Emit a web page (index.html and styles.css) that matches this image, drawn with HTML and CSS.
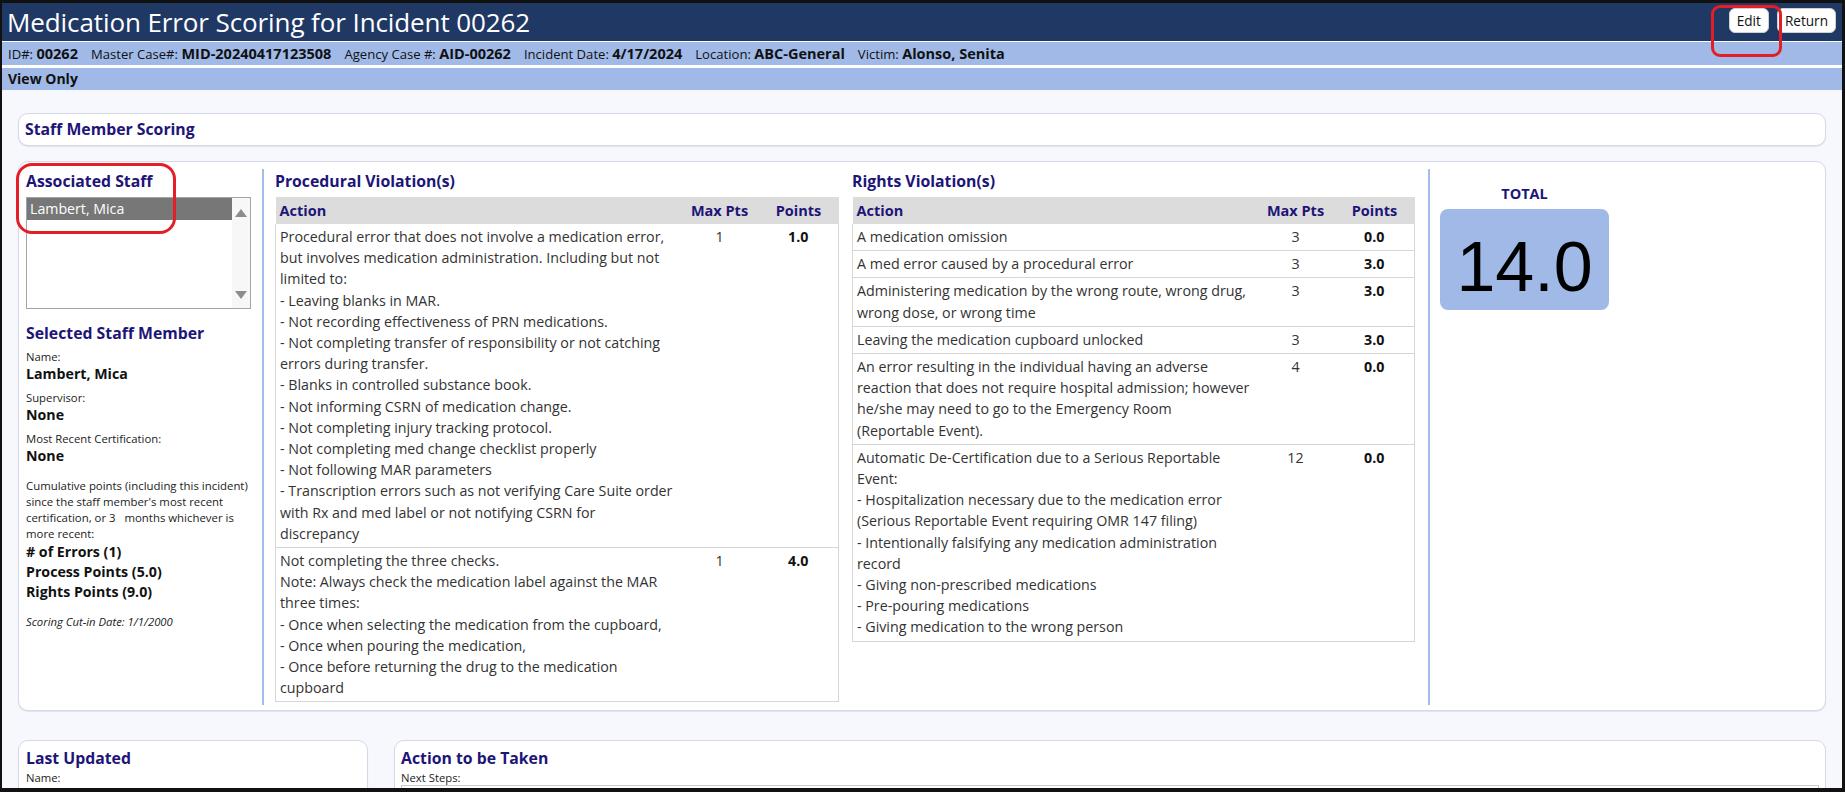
FILE: index.html
```html
<!DOCTYPE html>
<html lang="en">
<head>
<meta charset="utf-8">
<title>Medication Error Scoring for Incident 00262</title>
<link rel="stylesheet" href="styles.css">
</head>
<body>
<div class="screen">
  <header class="titlebar">
    <h1>Medication Error Scoring for Incident 00262</h1>
    <div class="actions">
      <button class="btn">Edit</button>
      <button class="btn">Return</button>
    </div>
  </header>
  <div class="infobar">
    <span class="item"><span class="lbl">ID#:</span> <b>00262</b></span>
    <span class="item"><span class="lbl">Master Case#:</span> <b>MID-20240417123508</b></span>
    <span class="item"><span class="lbl">Agency Case #:</span> <b>AID-00262</b></span>
    <span class="item"><span class="lbl">Incident Date:</span> <b>4/17/2024</b></span>
    <span class="item"><span class="lbl">Location:</span> <b>ABC-General</b></span>
    <span class="item"><span class="lbl">Victim:</span> <b>Alonso, Senita</b></span>
  </div>
  <div class="modebar">View Only</div>

  <main class="content">
    <section class="card card-head">
      <h2 class="card-title">Staff Member Scoring</h2>
    </section>

    <section class="card scoring">
      <div class="col staff">
        <h3 class="sec-title">Associated Staff</h3>
        <div class="listbox">
          <div class="list-items">
            <div class="list-item selected">Lambert, Mica</div>
          </div>
          <div class="list-scroll">
            <span class="arrow up"></span>
            <span class="arrow down"></span>
          </div>
        </div>

        <h3 class="sec-title sel-title">Selected Staff Member</h3>
        <div class="field">
          <div class="flabel">Name:</div>
          <div class="fvalue">Lambert, Mica</div>
        </div>
        <div class="field">
          <div class="flabel">Supervisor:</div>
          <div class="fvalue">None</div>
        </div>
        <div class="field">
          <div class="flabel">Most Recent Certification:</div>
          <div class="fvalue">None</div>
        </div>
        <p class="cumulative">Cumulative points (including this incident) since the staff member's most recent certification, or 3&nbsp;&nbsp; months whichever is<br>more recent:</p>
        <div class="totals">
          <div># of Errors (1)</div>
          <div>Process Points (5.0)</div>
          <div>Rights Points (9.0)</div>
        </div>
        <p class="cutin">Scoring Cut-in Date: 1/1/2000</p>
      </div>

      <div class="col proc">
        <h3 class="sec-title">Procedural Violation(s)</h3>
        <table class="vtable">
          <colgroup><col class="c-action"><col class="c-max"><col class="c-pts"></colgroup>
          <thead>
            <tr><th class="th-action">Action</th><th>Max Pts</th><th>Points</th></tr>
          </thead>
          <tbody>
            <tr>
              <td class="td-action">Procedural error that does not involve a medication error, but involves medication administration. Including but not limited to:<br>- Leaving blanks in MAR.<br>- Not recording effectiveness of PRN medications.<br>- Not completing transfer of responsibility or not catching errors during transfer.<br>- Blanks in controlled substance book.<br>- Not informing CSRN of medication change.<br>- Not completing injury tracking protocol.<br>- Not completing med change checklist properly<br>- Not following MAR parameters<br>- Transcription errors such as not verifying Care Suite order with Rx and med label or not notifying CSRN for<br>discrepancy</td>
              <td class="td-max">1</td>
              <td class="td-pts">1.0</td>
            </tr>
            <tr>
              <td class="td-action">Not completing the three checks.<br>Note: Always check the medication label against the MAR three times:<br>- Once when selecting the medication from the cupboard,<br>- Once when pouring the medication,<br>- Once before returning the drug to the medication cupboard</td>
              <td class="td-max">1</td>
              <td class="td-pts">4.0</td>
            </tr>
          </tbody>
        </table>
      </div>

      <div class="col rights">
        <h3 class="sec-title">Rights Violation(s)</h3>
        <table class="vtable">
          <colgroup><col class="c-action"><col class="c-max"><col class="c-pts"></colgroup>
          <thead>
            <tr><th class="th-action">Action</th><th>Max Pts</th><th>Points</th></tr>
          </thead>
          <tbody>
            <tr><td class="td-action">A medication omission</td><td class="td-max">3</td><td class="td-pts">0.0</td></tr>
            <tr><td class="td-action">A med error caused by a procedural error</td><td class="td-max">3</td><td class="td-pts">3.0</td></tr>
            <tr><td class="td-action">Administering medication by the wrong route, wrong drug, wrong dose, or wrong time</td><td class="td-max">3</td><td class="td-pts">3.0</td></tr>
            <tr><td class="td-action">Leaving the medication cupboard unlocked</td><td class="td-max">3</td><td class="td-pts">3.0</td></tr>
            <tr><td class="td-action">An error resulting in the individual having an adverse reaction that does not require hospital admission; however he/she may need to go to the Emergency Room<br>(Reportable Event).</td><td class="td-max">4</td><td class="td-pts">0.0</td></tr>
            <tr><td class="td-action">Automatic De-Certification due to a Serious Reportable Event:<br>- Hospitalization necessary due to the medication error (Serious Reportable Event requiring OMR 147 filing)<br>- Intentionally falsifying any medication administration record<br>- Giving non-prescribed medications<br>- Pre-pouring medications<br>- Giving medication to the wrong person</td><td class="td-max">12</td><td class="td-pts">0.0</td></tr>
          </tbody>
        </table>
      </div>

      <div class="col total">
        <div class="total-wrap">
          <div class="total-label">TOTAL</div>
          <div class="total-box">14.0</div>
        </div>
      </div>
    </section>

    <div class="bottom-row">
      <section class="card updated">
        <h3 class="sec-title">Last Updated</h3>
        <div class="flabel">Name:</div>
      </section>
      <section class="card todo">
        <h3 class="sec-title">Action to be Taken</h3>
        <div class="flabel">Next Steps:</div>
        <div class="textarea"></div>
      </section>
    </div>
  </main>

  <div class="annot annot-edit"></div>
  <div class="annot annot-staff"></div>
</div>
</body>
</html>
```

FILE: styles.css
```css
* { box-sizing: border-box; }

html, body {
  margin: 0;
  padding: 0;
  background: #111;
  height: 792px;
  overflow: hidden;
}

body {
  font-family: "Open Sans", "Noto Sans", sans-serif;
  color: #222;
  padding: 3px 3px 4px 2px;
}

.screen {
  position: relative;
  height: 785px;
  overflow: hidden;
  background: #f7f8fd;
}

/* ---------- title bar ---------- */
.titlebar {
  height: 39px;
  background: #1f3864;
  border-bottom: 1px solid #fff;
  display: flex;
  align-items: center;
  justify-content: space-between;
  padding: 0 6px 0 5px;
}

.titlebar h1 {
  margin: 0;
  font-weight: 400;
  font-size: 26px;
  color: #fff;
  line-height: 38px;
  letter-spacing: -0.1px;
}

.actions {
  display: flex;
  gap: 8px;
  align-self: flex-start;
  padding-top: 5px;
}

.btn {
  font-family: "Open Sans", "Noto Sans", sans-serif;
  font-size: 13.6px;
  color: #111;
  background: #fff;
  border: 1px solid #d0d0d0;
  border-radius: 6px;
  height: 25px;
  padding: 0 7px;
  line-height: 23px;
}

/* ---------- info bars ---------- */
.infobar {
  height: 26px;
  background: #a0b9e7;
  border-bottom: 3px solid #fff;
  display: flex;
  align-items: center;
  padding: 0 6px;
  font-size: 13.1px;
  color: #111;
  white-space: nowrap;
}

.infobar .item { margin-right: 13px; }
.infobar b { font-size: 14.5px; font-weight: 700; }

.modebar {
  height: 22px;
  background: #a0b9e7;
  font-weight: 700;
  font-size: 14px;
  line-height: 22px;
  padding: 0 6px;
  color: #111;
}

/* ---------- content ---------- */
.content {
  padding: 23px 16px 0 16px;
}

.card {
  background: #fff;
  border: 1px solid #d5d9e6;
  border-radius: 10px;
  box-shadow: 0 1px 1px rgba(150, 160, 190, 0.25);
}

.card-head {
  height: 33px;
  padding: 0 6px;
  display: flex;
  align-items: center;
}

.card-title, .sec-title {
  margin: 0;
  font-size: 15.8px;
  font-weight: 700;
  color: #1d1577;
}

.card-title { line-height: 31px; }

.scoring {
  margin-top: 15px;
  height: 550px;
  display: flex;
  padding: 7px 0 5px 7px;
}

.col { display: flex; flex-direction: column; }

.sec-title { line-height: 24px; }

/* staff column */
.staff {
  width: 225px;
  margin-right: 11px;
}

.staff .sec-title { margin-bottom: 4px; }

.listbox {
  height: 112px;
  border: 1px solid #a3a3a3;
  display: flex;
  background: #fff;
}

.list-items { flex: 1; }

.list-item {
  height: 22px;
  line-height: 22px;
  padding: 0 3px;
  font-size: 14.2px;
}

.list-item.selected {
  background: #777;
  color: #fff;
}

.list-scroll {
  width: 18px;
  background: #f7f7f7;
  display: flex;
  flex-direction: column;
  justify-content: space-between;
  align-items: center;
  padding: 11px 0 9px;
}

.arrow {
  width: 0;
  height: 0;
  border-left: 6px solid transparent;
  border-right: 6px solid transparent;
}
.arrow.up { border-bottom: 8px solid #8c8c8c; }
.arrow.down { border-top: 8px solid #8c8c8c; }

.sel-title {
  margin-top: 12px;
  margin-bottom: 5px;
}

.field { margin-bottom: 6px; }

.flabel {
  font-size: 11.3px;
  line-height: 15px;
  color: #222;
}

.fvalue {
  font-size: 14.2px;
  font-weight: 700;
  line-height: 20px;
  color: #111;
}

.cumulative {
  margin: 6px 0 0;
  font-size: 11.4px;
  line-height: 16px;
  color: #222;
}

.totals {
  font-size: 14.2px;
  font-weight: 700;
  line-height: 20px;
  color: #111;
}

.cutin {
  margin: 12px 0 0;
  font-size: 11.3px;
  line-height: 16px;
  font-style: italic;
  color: #222;
}

/* violation columns */
.proc {
  border-left: 2px solid #a3bce8;
  padding-left: 11px;
  margin-right: 13px;
}

.rights { margin-right: 13px; }

.proc .sec-title, .rights .sec-title { margin-bottom: 4px; }

.vtable {
  border-collapse: collapse;
  table-layout: fixed;
  width: 564px;
  font-size: 14.25px;
  line-height: 21.2px;
  color: #333;
}

.rights .vtable { width: 563px; }

.c-max { width: 78px; }
.c-pts { width: 80px; }

.vtable th {
  background: #dcdcdc;
  height: 27px;
  font-weight: 700;
  color: #1d1577;
  font-size: 14.5px;
  text-align: center;
  padding: 0;
  vertical-align: middle;
}

.vtable th.th-action {
  text-align: left;
  padding-left: 4px;
}

.vtable td {
  border: 1px solid #d6d6d6;
  border-width: 0 0 1px 0;
  padding: 2px 0 3px;
  vertical-align: top;
  text-align: center;
}

.vtable td.td-action {
  text-align: left;
  padding-left: 4px;
  padding-right: 2px;
  border-left-width: 1px;
}

.vtable td.td-pts {
  font-weight: 700;
  color: #111;
  border-right-width: 1px;
}

/* total column */
.total {
  border-left: 2px solid #a3bce8;
  padding-left: 10px;
}

.total-wrap {
  width: 169px;
  display: flex;
  flex-direction: column;
  align-items: center;
}

.total-label {
  margin-top: 15px;
  font-size: 14.5px;
  font-weight: 700;
  color: #1d1577;
  line-height: 20px;
}

.total-box {
  margin-top: 5px;
  width: 169px;
  height: 101px;
  background: #a0b9e7;
  border-radius: 8px;
  font-family: "Liberation Sans", Arial, sans-serif;
  font-size: 70px;
  color: #000;
  display: flex;
  align-items: center;
  justify-content: center;
  padding-top: 14px;
}

/* bottom row */
.bottom-row {
  display: flex;
  gap: 26px;
  margin-top: 29px;
}

.updated {
  width: 350px;
  height: 80px;
  padding: 5px 7px;
}

.todo {
  flex: 1;
  height: 80px;
  padding: 5px 6px;
}

.textarea {
  margin-top: 0;
  height: 30px;
  border: 1px solid #c8c8c8;
  background: #fff;
}

/* red annotation marks */
.annot {
  position: absolute;
  border: 3px solid #e41e26;
  pointer-events: none;
}

.annot-edit {
  left: 1709px;
  top: 2px;
  width: 71px;
  height: 52px;
  border-radius: 9px;
}

.annot-staff {
  left: 14px;
  top: 160px;
  width: 160px;
  height: 71px;
  border-radius: 16px;
}
```
